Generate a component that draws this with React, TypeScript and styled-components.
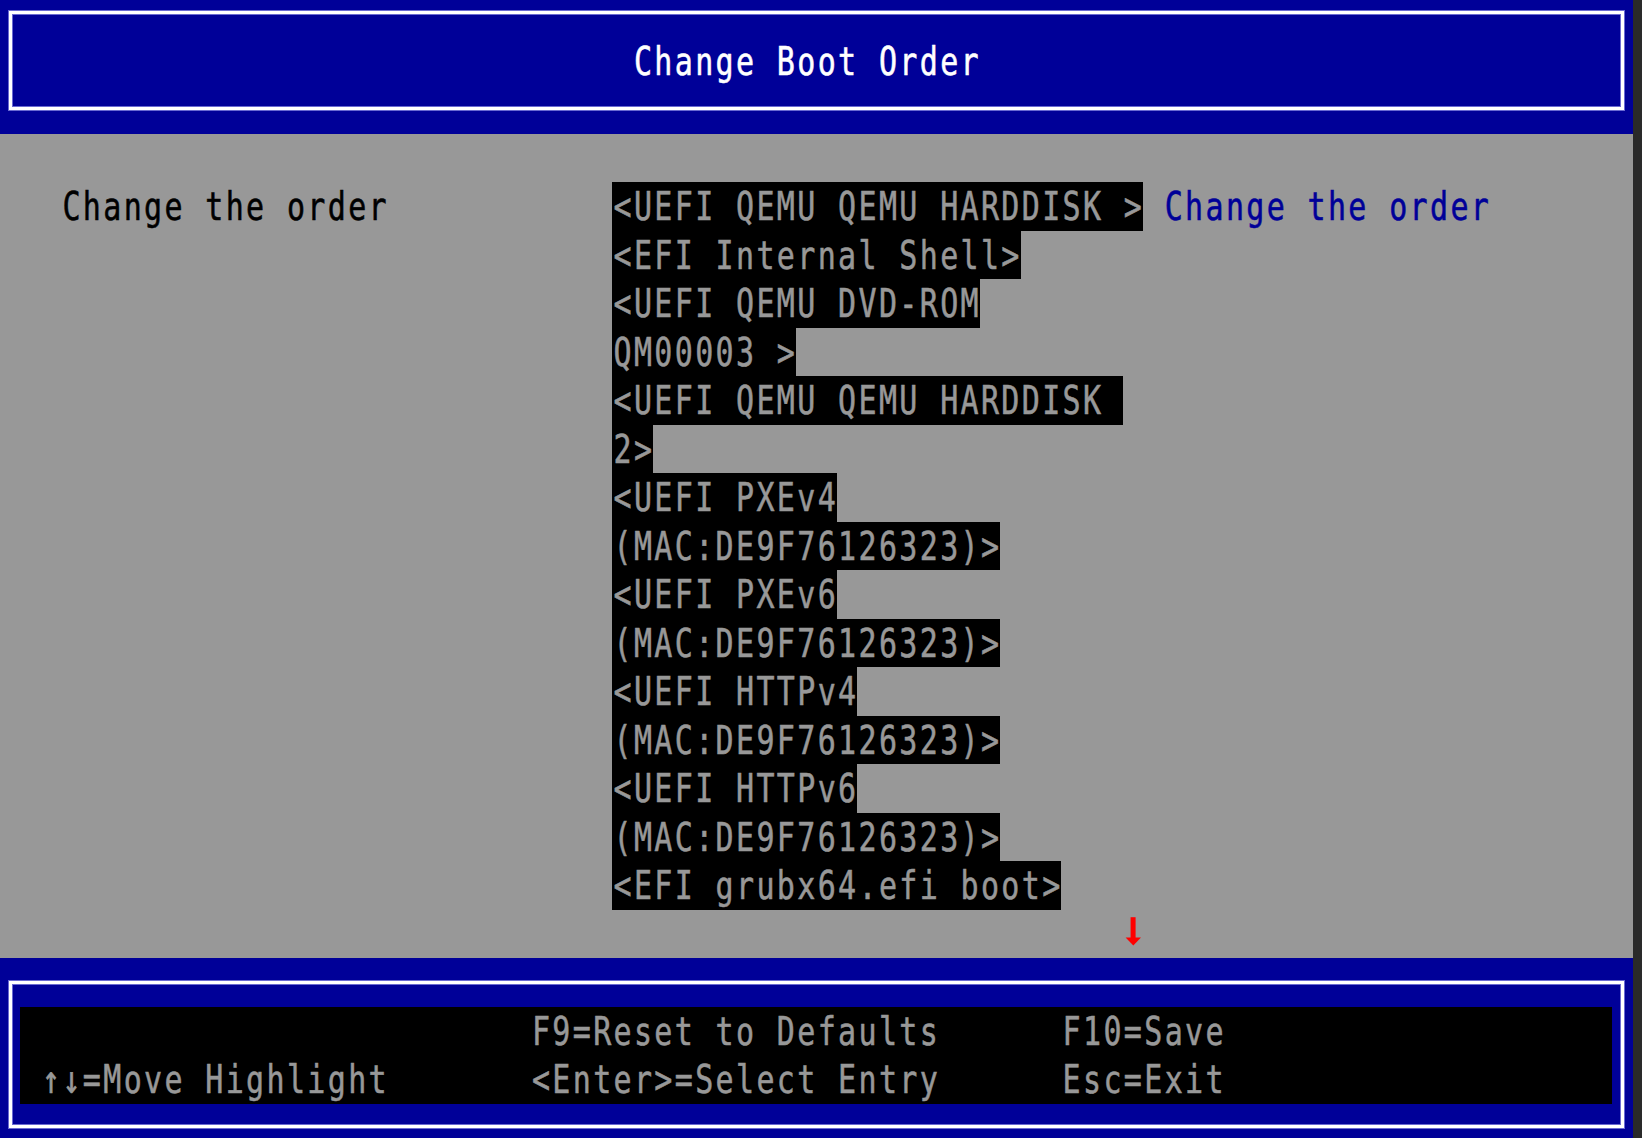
import styled, { createGlobalStyle } from "styled-components"

// text-mode grid: 80 columns across the screen, 8x19 cells scaled up
const CELL_W = 1633 / 80
const ROW_H = 48.5
const FONT_SIZE = 30
const TRACK = CELL_W - FONT_SIZE * 0.60205 // DejaVu Sans Mono advance is 0.602em
const FRAME_INSET = 12 // outer margin + border of the box frame

const BLUE = "#000098"
const GREY = "#989898"

const cells = (n: number) => `${n * CELL_W}px`

const GlobalStyle = createGlobalStyle`
    html, body {
        margin: 0;
        padding: 0;
        background: #2a2a2a;
    }
    body {
        font-family: "DejaVu Sans Mono", "Liberation Mono", monospace;
    }
`

const Screen = styled.div`
    width: 1633px;
    height: 1138px;
    display: flex;
    flex-direction: column;
    overflow: hidden;
`

const TitleBar = styled.header`
    height: ${ROW_H * 2 + 36.5}px;
    flex-shrink: 0;
    background: ${BLUE};
    padding: 11px 9px 0;
    box-sizing: border-box;
`

const KeyBar = styled.footer`
    flex: 1;
    background: ${BLUE};
    padding: 23px 9px 0;
    box-sizing: border-box;
`

// the single-line box the form browser draws round header and footer
const Frame = styled.div<{ $height: number; $indent: number }>`
    height: ${p => p.$height}px;
    box-sizing: border-box;
    border: 3px solid #ffffff;
    box-shadow: 0 0 0 1px #6a6ad2, inset 0 0 0 1px #6a6ad2;
    padding: 22.5px 8.6px 0 ${p => p.$indent * CELL_W - FRAME_INSET}px;
`

// one line of text cells; transform stretches the glyphs to the tall 8x19 shape
const Cells = styled.span<{ $color: string }>`
    display: block;
    height: ${ROW_H}px;
    line-height: ${ROW_H}px;
    font-size: ${FONT_SIZE}px;
    letter-spacing: ${TRACK}px;
    padding-left: ${TRACK / 2}px;
    white-space: pre;
    color: ${p => p.$color};
    -webkit-text-stroke: 0.45px ${p => p.$color};
    transform: translateY(0.8px) scaleY(1.28);
`

const Form = styled.main`
    height: ${ROW_H * 17}px;
    flex-shrink: 0;
    background: ${GREY};
    padding: ${ROW_H}px 0 0 ${cells(3)};
    box-sizing: border-box;
    display: grid;
    grid-template-columns: ${cells(27)} ${cells(27)} 1fr;
    align-items: start;
`

const OrderList = styled.div`
    display: flex;
    flex-direction: column;
    align-items: flex-start;
`

const OrderLine = styled.div<{ $cols: number }>`
    width: ${p => cells(p.$cols)};
    height: ${ROW_H}px;
    background: #000000;
`

const MoreBelow = styled.div`
    width: ${cells(1)};
    height: ${ROW_H}px;
    margin-left: ${cells(25)};
`

const KeyPanel = styled.div`
    height: ${ROW_H * 2}px;
    background: #000000;
    display: grid;
    grid-template-columns: ${cells(25)} ${cells(26)} 1fr;
    grid-template-rows: ${ROW_H}px ${ROW_H}px;
`

const KeyCell = styled.div<{ $indent?: number }>`
    padding-left: ${p => cells(p.$indent ?? 0)};
`

const bootOptions: string[][] = [
    ["<UEFI QEMU QEMU HARDDISK >"],
    ["<EFI Internal Shell>"],
    ["<UEFI QEMU DVD-ROM", "QM00003 >"],
    ["<UEFI QEMU QEMU HARDDISK ", "2>"],
    ["<UEFI PXEv4", "(MAC:DE9F76126323)>"],
    ["<UEFI PXEv6", "(MAC:DE9F76126323)>"],
    ["<UEFI HTTPv4", "(MAC:DE9F76126323)>"],
    ["<UEFI HTTPv6", "(MAC:DE9F76126323)>"],
    ["<EFI grubx64.efi boot>"],
]

function DownArrow() {
    return (
        <svg width={CELL_W} height={ROW_H} viewBox={`0 0 ${CELL_W} ${ROW_H}`}>
            <rect x={7.6} y={7.2} width={5} height={21} fill="#ff0000" />
            <polygon points="2.6,27.6 18,27.6 10.3,35.6" fill="#ff0000" />
        </svg>
    )
}

export default function App() {
    const lines = bootOptions.flat()

    return (
        <>
            <GlobalStyle />
            <Screen>
                <TitleBar>
                    <Frame $height={99} $indent={31}>
                        <Cells $color="#ffffff">Change Boot Order</Cells>
                    </Frame>
                </TitleBar>

                <Form>
                    <Cells $color="#000000">Change the order</Cells>
                    <OrderList>
                        {lines.map((line, i) => (
                            <OrderLine key={i} $cols={line.length}>
                                <Cells $color={GREY}>{line}</Cells>
                            </OrderLine>
                        ))}
                        <MoreBelow>
                            <DownArrow />
                        </MoreBelow>
                    </OrderList>
                    <Cells $color={BLUE}>Change the order</Cells>
                </Form>

                <KeyBar>
                    <Frame $height={147} $indent={1}>
                        <KeyPanel>
                            <KeyCell />
                            <KeyCell><Cells $color={GREY}>F9=Reset to Defaults</Cells></KeyCell>
                            <KeyCell><Cells $color={GREY}>F10=Save</Cells></KeyCell>
                            <KeyCell $indent={1}><Cells $color={GREY}>↑↓=Move Highlight</Cells></KeyCell>
                            <KeyCell><Cells $color={GREY}>&lt;Enter&gt;=Select Entry</Cells></KeyCell>
                            <KeyCell><Cells $color={GREY}>Esc=Exit</Cells></KeyCell>
                        </KeyPanel>
                    </Frame>
                </KeyBar>
            </Screen>
        </>
    )
}
